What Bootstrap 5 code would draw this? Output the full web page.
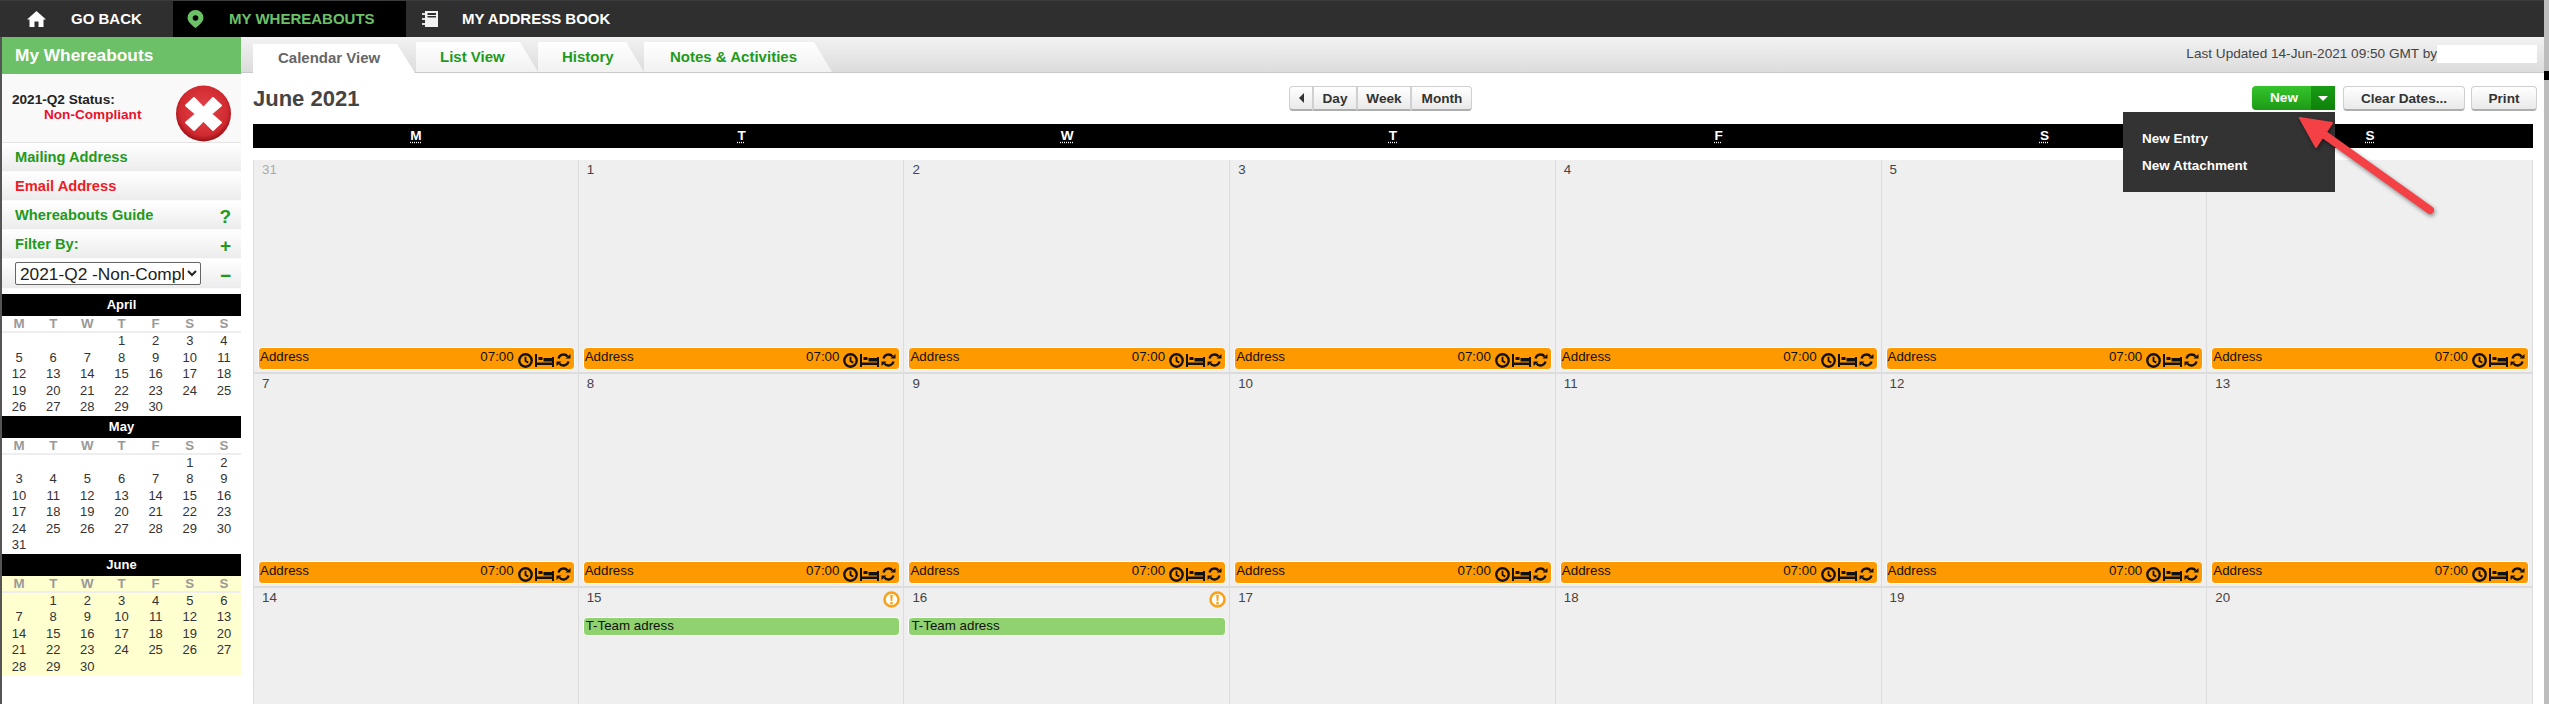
<!DOCTYPE html>
<html lang="en">
<head>
<meta charset="utf-8">
<title>My Whereabouts</title>
<link rel="stylesheet" href="https://cdn.jsdelivr.net/npm/bootstrap@5.3.0/dist/css/bootstrap.min.css">
<style>
html,body{height:704px;overflow:hidden;background:#fff}
body{font-family:"Liberation Sans",Arial,sans-serif;font-size:13.33px;color:#333;position:relative}
.app-wrap{height:704px}
.app-area{width:2544px;flex:none}
.scroll-strip{width:5px;flex:none;background:#bdbdbd}
.scroll-strip span{display:block;height:9px;margin-top:71px;background:#000}
.top-bar{height:37px;background:#2f2f2f;padding:0;flex-wrap:nowrap;justify-content:flex-start;border-top:1px solid #3c3c3c}
.top-item{height:36px;display:flex;align-items:center;color:#fff;font-weight:700;font-size:15px;text-decoration:none;white-space:nowrap}
.top-item:hover{color:#fff}
.ti-back{width:173px;padding-left:27px;gap:25px}
.ti-where{width:233px;padding-left:14px;gap:25px;background:#000;color:#6cc068}
.ti-where:hover{color:#6cc068}
.ti-book{padding-left:16px;gap:24px}
.side-col{width:241px;flex:none;border-left:2px solid #555;height:667px}
.side-title{height:37px;background:#6cc068;color:#fff;font-weight:700;font-size:17.3px;padding-left:13px;display:flex;align-items:center}
.status-box{height:69px;padding-left:10px;background:#f9f9f9;border-bottom:1px solid #e4e4e4;position:relative;font-size:13.6px;font-weight:700;color:#222;display:flex;justify-content:space-between;align-items:center;padding-right:9px}
.status-box svg{align-self:flex-end}
.status-bad{color:#e8112d;padding-left:32px;display:block}
.status-text{line-height:15px;margin-top:-3px}
.side-row{height:29px;display:flex;align-items:center;justify-content:space-between;padding:0 10px 0 13px;background:linear-gradient(#fff,#ececec);border-bottom:1px solid #fafafa;font-size:14.67px;font-weight:700;color:#1f9a1c;text-decoration:none}
.side-row:hover{color:#1f9a1c}
.side-row.is-red{color:#ee1c25}
.side-mark{font-size:19px;line-height:1;margin-top:3px}
.side-pick{height:30px;margin-bottom:5px;padding-left:13px}
.side-pick select{width:186px;height:23px;font-family:"Liberation Sans",Arial,sans-serif;font-size:17.3px;line-height:1;background:#fff;color:#222;border:1px solid #666;border-radius:2px;padding:0}
.mini-head{height:22px;background:#000;color:#fff;font-weight:700;font-size:13px;display:flex;align-items:center;justify-content:center}
.mini-week,.mini-days{display:grid;grid-template-columns:repeat(7,1fr);text-align:center}
.mini-week{height:17px;color:#999;font-weight:700;font-size:13.3px;line-height:15px;border-bottom:2px solid #eee}
.mini-days{grid-auto-rows:16.5px;font-size:13px;line-height:16.5px;color:#333}
.mini-now{background:#ffffcf}
.st2{grid-column-start:2}.st4{grid-column-start:4}.st6{grid-column-start:6}
.main-col{width:2303px;flex:none}
.tab-bar{height:36px;background:linear-gradient(#f2f2f2,#dcdcdc);border-bottom:1px solid #c9c9c9;padding-left:12px;align-items:flex-end;flex-wrap:nowrap;border-top:0}
.tab-link{display:flex;align-items:center;height:30px;padding:0 0 0 24px;font-size:15px;font-weight:700;color:#1f9a1c;text-decoration:none;background:linear-gradient(#fff,#f1f1f1);clip-path:polygon(0 0,calc(100% - 18px) 0,100% 100%,0 100%)}
.tab-link:hover{color:#1f9a1c}
.tab-on{color:#666;background:#fff;height:29px;margin-bottom:-1px;width:162px;padding-left:25px}
.tab-on:hover{color:#666}
.tab-a{width:122px;margin-left:1px}
.tab-b{width:106px}
.tab-c{width:188px;padding-left:26px}
.last-upd{margin-left:auto;margin-right:7px;align-self:center;display:flex;align-items:center;font-size:13.6px;color:#444;white-space:nowrap}
.last-upd i{display:block;width:100px;height:18px;background:#fff}
.tool-row{height:51px;padding:13px 7px 0 12px;align-items:flex-start}
.page-title{width:1036px;font-size:22px;font-weight:700;color:#444;margin:-1px 0 0;line-height:27px;flex:none}
.tb-btn{height:25px;padding:0 8px;font-size:13.6px;font-weight:700;line-height:21px;color:#333;background:linear-gradient(#fff,#e9e9e9);border:1px solid #d0d0d0;border-bottom:2px solid #aeaeae;border-radius:4px}
.tb-btn:hover{color:#333;background:linear-gradient(#fff,#e9e9e9);border-color:#d0d0d0}
.btn-group>.tb-btn.btn:not(:first-child),.btn-group>.tb-caret.btn:not(:first-child){margin-left:0}
.tb-prev{width:24px;padding:0}
.tb-day{width:44px;padding:0}
.tb-week{width:54px;padding:0}
.tb-month{width:61px;padding:0 0 0 1px}
.tb-new,.tb-new:hover{width:59px;height:24px;padding:0 0 0 5px;color:#fff;background:linear-gradient(#35c42c,#1d9a16);border:0;border-radius:4px 0 0 4px;font-size:13.6px;font-weight:700;line-height:22px}
.tb-caret,.tb-caret:hover{width:24px;height:24px;padding:0;background:linear-gradient(#1a9c14,#0e810b);border:0;border-radius:0 4px 4px 0;display:flex;align-items:center;justify-content:center}
.caret-dn{display:block;width:0;height:0;border-left:5px solid transparent;border-right:5px solid transparent;border-top:5px solid #fff}
.caret-lt{display:inline-block;width:0;height:0;border-top:5px solid transparent;border-bottom:5px solid transparent;border-right:5px solid #333}
.tb-clear{width:122px;margin-left:8px;padding:0}
.tb-print{width:66px;margin-left:6px;padding:0}
.new-menu{right:0;left:auto;top:26px;width:212px;height:80px;background:#333;border:0;border-radius:0;padding:13px 0 0;margin:0;min-width:0;z-index:5}
.new-item{padding:0 0 0 19px;color:#fff;font-weight:700;font-size:13.5px;line-height:27px;background:none}
.new-item:hover{color:#fff;background:none}
.cal-wrap{margin:0 11px 0 12px}
.cal-head{display:grid;grid-template-columns:repeat(7,1fr);height:24px;background:#000;color:#fff;text-align:center;font-weight:700;font-size:13.6px;line-height:24px;margin-bottom:12px}
.cal-head abbr{text-decoration:underline dotted;text-underline-offset:2px}
.cal-grid{display:grid;grid-template-columns:repeat(7,1fr);grid-auto-rows:214px}
.cal-cell{background:#efefef;border-right:1px solid #dcdcdc;border-bottom:2px solid #dcdcdc;display:flex;flex-direction:column;min-width:0;padding:0 3px 2px 4px}
.cal-first{border-left:1px solid #dcdcdc}
.cal-date{height:29px;padding:1px 0 0 4px;line-height:18px;color:#444;display:flex;justify-content:space-between;font-size:13.33px}
.cal-date.is-off{color:#aaa}
.addr-bar{margin-top:auto;height:23px;background:#f90;border:1px solid #fff;border-radius:4px;color:#111;display:flex;padding:0 3px 0 1px;line-height:18px;font-size:13.33px}
.addr-bar b{font-weight:400;margin-left:auto;margin-right:4px}
.addr-icons{display:flex;align-items:center;height:21px;padding-top:3px;gap:2px}
.team-bar{height:19px;background:#90d26f;border:1px solid #fff;border-radius:4px;color:#111;line-height:16px;padding-left:2px;font-size:13.33px}
.warn-ic{margin:2px 0 0}
.red-arrow{position:absolute;left:2280px;top:100px;z-index:9;filter:drop-shadow(1px 2px 2px rgba(0,0,0,.45))}
.cal-rows{height:544px;overflow:hidden}
</style>
</head>
<body>
<svg width="0" height="0" class="d-block">
<defs>
<symbol id="ic-clock" viewBox="0 0 14 14"><circle cx="7" cy="7" r="5.800" fill="none" stroke="#111" stroke-width="2.200"/><path d="M7 3.600V7.400L9.600 9" fill="none" stroke="#111" stroke-width="1.700"/></symbol>
<symbol id="ic-bed" viewBox="0 0 19 13"><path d="M0 0H2V13H0ZM17 3H19V13H17ZM2 8.500H17V11H2ZM3.500 3H7.500V6H3.500ZM8.500 4H17V7.500H8.500Z" fill="#111"/></symbol>
<symbol id="ic-sync" viewBox="0 0 15 14"><path d="M2.500 5.500A5.200 5.200 0 0 1 11.600 3.500M12.500 8.500A5.200 5.200 0 0 1 3.400 10.500" fill="none" stroke="#111" stroke-width="2.300"/><path d="M9.500 5.500H14.500V1ZM5.500 8.500H.5V13Z" fill="#111"/></symbol>
</defs>
</svg>
<div class="app-wrap d-flex">
<div class="app-area">
<nav class="navbar top-bar">
  <a class="top-item ti-back" href="#"><svg width="19" height="16" viewBox="0 0 19 16"><path d="M9.500 0 19 8.500H16.500V16H11.500V10.500H7.500V16H2.500V8.500H0Z" fill="#fff"/></svg>GO BACK</a>
  <a class="top-item ti-where" href="#"><svg width="17" height="18" viewBox="0 0 17 18"><path fill-rule="evenodd" d="M8.500 0A8 8 0 0 1 16.500 8C16.500 12 11 16 8.500 18 6 16 .5 12 .5 8A8 8 0 0 1 8.500 0ZM8.500 5.200A2.800 2.800 0 1 0 8.500 10.800 2.800 2.800 0 0 0 8.500 5.200Z" fill="#6cc068"/></svg>MY WHEREABOUTS</a>
  <a class="top-item ti-book" href="#"><svg width="16" height="16" viewBox="0 0 16 16"><path fill-rule="evenodd" d="M3 0H16V16H3ZM5.500 2V4H14V2ZM5.500 5V6.500H14V5Z" fill="#f2f2f2"/><path d="M0 2H3V4H0ZM0 7H3V9H0ZM0 12H3V14H0Z" fill="#ddd"/></svg>MY ADDRESS BOOK</a>
</nav>
<div class="d-flex">
  <aside class="side-col">
    <div class="side-title">My Whereabouts</div>
    <div class="status-box">
      <div class="status-text">2021-Q2 Status:<span class="status-bad">Non-Compliant</span></div>
      <svg width="57" height="57" viewBox="0 0 57 57"><defs><radialGradient id="redball" cx=".5" cy=".45" r=".55"><stop offset="0" stop-color="#e6474d"/><stop offset=".8" stop-color="#d02a30"/><stop offset="1" stop-color="#971015"/></radialGradient></defs><ellipse cx="28.500" cy="28.500" rx="27.500" ry="28" fill="url(#redball)"/><path d="M19 13 28.500 23 38 13 46 20.500 36 29 46 37.500 38 45 28.500 35.500 19 45 11 37.500 21 29 11 20.500Z" fill="#fff" stroke="#fff" stroke-width="2" stroke-linejoin="round"/></svg>
    </div>
    <a class="side-row" href="#">Mailing Address</a>
    <a class="side-row is-red" href="#">Email Address</a>
    <a class="side-row" href="#">Whereabouts Guide<span class="side-mark">?</span></a>
    <div class="side-row">Filter By:<span class="side-mark">+</span></div>
    <div class="side-row side-pick"><select aria-label="Filter"><option>2021-Q2 -Non-Compliant</option></select><span class="side-mark">&#8722;</span></div>

    <div class="mini-head">April</div>
    <div class="mini-week"><span>M</span><span>T</span><span>W</span><span>T</span><span>F</span><span>S</span><span>S</span></div>
    <div class="mini-days"><span class="st4">1</span><span>2</span><span>3</span><span>4</span><span>5</span><span>6</span><span>7</span><span>8</span><span>9</span><span>10</span><span>11</span><span>12</span><span>13</span><span>14</span><span>15</span><span>16</span><span>17</span><span>18</span><span>19</span><span>20</span><span>21</span><span>22</span><span>23</span><span>24</span><span>25</span><span>26</span><span>27</span><span>28</span><span>29</span><span>30</span></div>

    <div class="mini-head">May</div>
    <div class="mini-week"><span>M</span><span>T</span><span>W</span><span>T</span><span>F</span><span>S</span><span>S</span></div>
    <div class="mini-days"><span class="st6">1</span><span>2</span><span>3</span><span>4</span><span>5</span><span>6</span><span>7</span><span>8</span><span>9</span><span>10</span><span>11</span><span>12</span><span>13</span><span>14</span><span>15</span><span>16</span><span>17</span><span>18</span><span>19</span><span>20</span><span>21</span><span>22</span><span>23</span><span>24</span><span>25</span><span>26</span><span>27</span><span>28</span><span>29</span><span>30</span><span>31</span></div>

    <div class="mini-head">June</div>
    <div class="mini-now">
    <div class="mini-week"><span>M</span><span>T</span><span>W</span><span>T</span><span>F</span><span>S</span><span>S</span></div>
    <div class="mini-days"><span class="st2">1</span><span>2</span><span>3</span><span>4</span><span>5</span><span>6</span><span>7</span><span>8</span><span>9</span><span>10</span><span>11</span><span>12</span><span>13</span><span>14</span><span>15</span><span>16</span><span>17</span><span>18</span><span>19</span><span>20</span><span>21</span><span>22</span><span>23</span><span>24</span><span>25</span><span>26</span><span>27</span><span>28</span><span>29</span><span>30</span></div>
    </div>
  </aside>
  <main class="main-col">
    <div class="nav tab-bar">
      <a class="tab-link tab-on" href="#">Calendar View</a>
      <a class="tab-link tab-a" href="#">List View</a>
      <a class="tab-link tab-b" href="#">History</a>
      <a class="tab-link tab-c" href="#">Notes &amp; Activities</a>
      <div class="last-upd">Last Updated 14-Jun-2021 09:50 GMT by<i></i></div>
    </div>
    <div class="d-flex tool-row">
      <h1 class="page-title">June 2021</h1>
      <div class="btn-group">
        <button class="btn tb-btn tb-prev" aria-label="Previous"><span class="caret-lt"></span></button>
        <button class="btn tb-btn tb-day">Day</button>
        <button class="btn tb-btn tb-week">Week</button>
        <button class="btn tb-btn tb-month">Month</button>
      </div>
      <div class="d-flex ms-auto">
        <div class="btn-group">
          <button class="btn tb-new">New</button>
          <button class="btn tb-caret" aria-label="More"><span class="caret-dn"></span></button>
          <div class="dropdown-menu show new-menu">
            <a class="dropdown-item new-item" href="#">New Entry</a>
            <a class="dropdown-item new-item" href="#">New Attachment</a>
          </div>
        </div>
        <button class="btn tb-btn tb-clear">Clear Dates...</button>
        <button class="btn tb-btn tb-print">Print</button>
      </div>
    </div>
    <div class="cal-wrap">
      <div class="cal-head"><span><abbr title="Monday">M</abbr></span><span><abbr title="Tuesday">T</abbr></span><span><abbr title="Wednesday">W</abbr></span><span><abbr title="Thursday">T</abbr></span><span><abbr title="Friday">F</abbr></span><span><abbr title="Saturday">S</abbr></span><span><abbr title="Sunday">S</abbr></span></div>
      <div class="cal-rows">
      <div class="cal-grid">
        <div class="cal-cell cal-first"><div class="cal-date is-off">31</div><div class="addr-bar">Address<b>07:00</b><span class="addr-icons"><svg width="15" height="15"><use href="#ic-clock"/></svg><svg width="19" height="13"><use href="#ic-bed"/></svg><svg width="15" height="14"><use href="#ic-sync"/></svg></span></div></div>
        <div class="cal-cell"><div class="cal-date">1</div><div class="addr-bar">Address<b>07:00</b><span class="addr-icons"><svg width="15" height="15"><use href="#ic-clock"/></svg><svg width="19" height="13"><use href="#ic-bed"/></svg><svg width="15" height="14"><use href="#ic-sync"/></svg></span></div></div>
        <div class="cal-cell"><div class="cal-date">2</div><div class="addr-bar">Address<b>07:00</b><span class="addr-icons"><svg width="15" height="15"><use href="#ic-clock"/></svg><svg width="19" height="13"><use href="#ic-bed"/></svg><svg width="15" height="14"><use href="#ic-sync"/></svg></span></div></div>
        <div class="cal-cell"><div class="cal-date">3</div><div class="addr-bar">Address<b>07:00</b><span class="addr-icons"><svg width="15" height="15"><use href="#ic-clock"/></svg><svg width="19" height="13"><use href="#ic-bed"/></svg><svg width="15" height="14"><use href="#ic-sync"/></svg></span></div></div>
        <div class="cal-cell"><div class="cal-date">4</div><div class="addr-bar">Address<b>07:00</b><span class="addr-icons"><svg width="15" height="15"><use href="#ic-clock"/></svg><svg width="19" height="13"><use href="#ic-bed"/></svg><svg width="15" height="14"><use href="#ic-sync"/></svg></span></div></div>
        <div class="cal-cell"><div class="cal-date">5</div><div class="addr-bar">Address<b>07:00</b><span class="addr-icons"><svg width="15" height="15"><use href="#ic-clock"/></svg><svg width="19" height="13"><use href="#ic-bed"/></svg><svg width="15" height="14"><use href="#ic-sync"/></svg></span></div></div>
        <div class="cal-cell"><div class="cal-date">6</div><div class="addr-bar">Address<b>07:00</b><span class="addr-icons"><svg width="15" height="15"><use href="#ic-clock"/></svg><svg width="19" height="13"><use href="#ic-bed"/></svg><svg width="15" height="14"><use href="#ic-sync"/></svg></span></div></div>

        <div class="cal-cell cal-first"><div class="cal-date">7</div><div class="addr-bar">Address<b>07:00</b><span class="addr-icons"><svg width="15" height="15"><use href="#ic-clock"/></svg><svg width="19" height="13"><use href="#ic-bed"/></svg><svg width="15" height="14"><use href="#ic-sync"/></svg></span></div></div>
        <div class="cal-cell"><div class="cal-date">8</div><div class="addr-bar">Address<b>07:00</b><span class="addr-icons"><svg width="15" height="15"><use href="#ic-clock"/></svg><svg width="19" height="13"><use href="#ic-bed"/></svg><svg width="15" height="14"><use href="#ic-sync"/></svg></span></div></div>
        <div class="cal-cell"><div class="cal-date">9</div><div class="addr-bar">Address<b>07:00</b><span class="addr-icons"><svg width="15" height="15"><use href="#ic-clock"/></svg><svg width="19" height="13"><use href="#ic-bed"/></svg><svg width="15" height="14"><use href="#ic-sync"/></svg></span></div></div>
        <div class="cal-cell"><div class="cal-date">10</div><div class="addr-bar">Address<b>07:00</b><span class="addr-icons"><svg width="15" height="15"><use href="#ic-clock"/></svg><svg width="19" height="13"><use href="#ic-bed"/></svg><svg width="15" height="14"><use href="#ic-sync"/></svg></span></div></div>
        <div class="cal-cell"><div class="cal-date">11</div><div class="addr-bar">Address<b>07:00</b><span class="addr-icons"><svg width="15" height="15"><use href="#ic-clock"/></svg><svg width="19" height="13"><use href="#ic-bed"/></svg><svg width="15" height="14"><use href="#ic-sync"/></svg></span></div></div>
        <div class="cal-cell"><div class="cal-date">12</div><div class="addr-bar">Address<b>07:00</b><span class="addr-icons"><svg width="15" height="15"><use href="#ic-clock"/></svg><svg width="19" height="13"><use href="#ic-bed"/></svg><svg width="15" height="14"><use href="#ic-sync"/></svg></span></div></div>
        <div class="cal-cell"><div class="cal-date">13</div><div class="addr-bar">Address<b>07:00</b><span class="addr-icons"><svg width="15" height="15"><use href="#ic-clock"/></svg><svg width="19" height="13"><use href="#ic-bed"/></svg><svg width="15" height="14"><use href="#ic-sync"/></svg></span></div></div>

        <div class="cal-cell cal-first"><div class="cal-date">14</div></div>
        <div class="cal-cell"><div class="cal-date">15<svg class="warn-ic" width="17" height="17" viewBox="0 0 17 17"><circle cx="8.500" cy="8.500" r="7" fill="#fff" stroke="#f9a11b" stroke-width="2.600"/><path d="M7.200 3.800H9.800L9.300 10H7.700ZM7.300 11H9.700V13.400H7.300Z" fill="#f9a11b"/></svg></div><div class="team-bar">T-Team adress</div></div>
        <div class="cal-cell"><div class="cal-date">16<svg class="warn-ic" width="17" height="17" viewBox="0 0 17 17"><circle cx="8.500" cy="8.500" r="7" fill="#fff" stroke="#f9a11b" stroke-width="2.600"/><path d="M7.200 3.800H9.800L9.300 10H7.700ZM7.300 11H9.700V13.400H7.300Z" fill="#f9a11b"/></svg></div><div class="team-bar">T-Team adress</div></div>
        <div class="cal-cell"><div class="cal-date">17</div></div>
        <div class="cal-cell"><div class="cal-date">18</div></div>
        <div class="cal-cell"><div class="cal-date">19</div></div>
        <div class="cal-cell"><div class="cal-date">20</div></div>
      </div>
      </div>
    </div>
  </main>
</div>
</div>
<div class="scroll-strip"><span></span></div>
</div>
<svg class="red-arrow" width="170" height="120" viewBox="0 0 170 120"><path d="M150 110 42 33" stroke="#f44146" stroke-width="8" stroke-linecap="round" fill="none"/><path d="M20 18 52 23 36 47Z" fill="#f44146" stroke="#f44146" stroke-width="2" stroke-linejoin="round"/></svg>
<script src="https://cdn.jsdelivr.net/npm/bootstrap@5.3.0/dist/js/bootstrap.bundle.min.js"></script>
</body>
</html>
